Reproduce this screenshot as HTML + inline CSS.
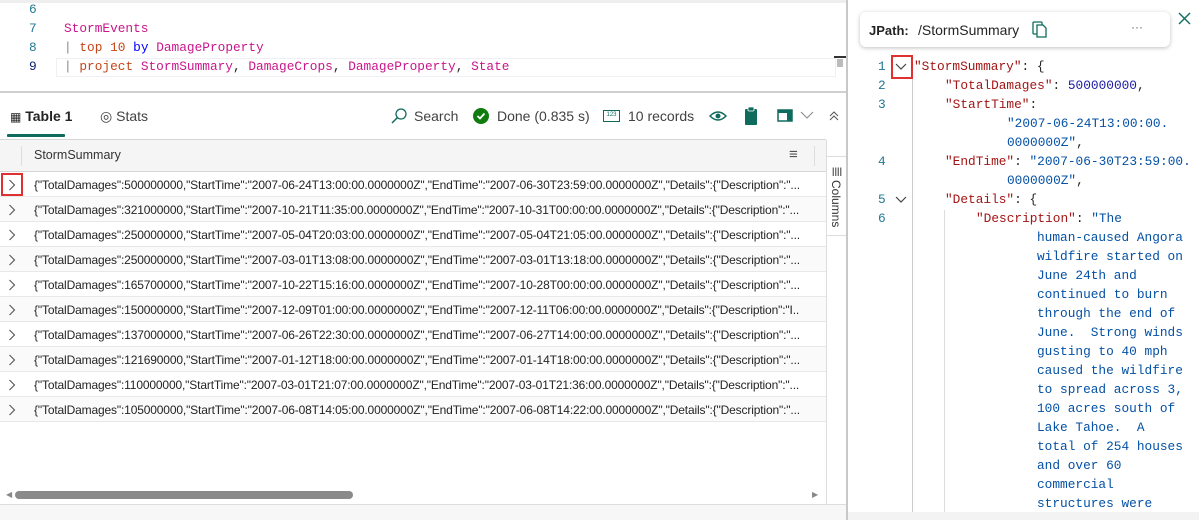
<!DOCTYPE html>
<html><head><meta charset="utf-8"><style>
*{margin:0;padding:0;box-sizing:border-box}
body{width:1199px;height:520px;overflow:hidden;background:#fff;font-family:"Liberation Sans",sans-serif;position:relative;color:#242424}
.a{position:absolute;white-space:nowrap}
.m{font-family:"Liberation Mono",monospace;font-size:12.8px}
.ln{color:#237893;font-family:"Liberation Mono",monospace;font-size:12.8px}
.kw{color:#c8168c}.op{color:#c4461a}.bl{color:#0000ff}
.row{position:absolute;left:0;width:826px;height:25px;border-bottom:1px solid #e8e8e8;font-size:12px}
.row .c{position:absolute;left:8px;top:7px}
.row .t{position:absolute;left:34px;top:6px;width:766px;overflow:hidden;white-space:nowrap;letter-spacing:-0.15px}
.jk{color:#a31515}.jn{color:#098658}.js{color:#0451a5}.jp{color:#242424}
.j{position:absolute;font-family:"Liberation Mono",monospace;font-size:12.8px;white-space:pre;line-height:19px}
</style></head><body>
<div class="a" style="left:0;top:0;width:846px;height:3px;background:#eee"></div>
<div class="a ln" style="left:29px;top:2px">6</div>
<div class="a ln" style="left:29px;top:21px">7</div>
<div class="a ln" style="left:29px;top:40px">8</div>
<div class="a ln" style="left:29px;top:59px;color:#0b216f">9</div>
<div class="a m" style="left:64px;top:21px"><span class="kw">StormEvents</span></div>
<div class="a m" style="left:64px;top:40px"><span style="color:#888">|</span> <span class="op">top</span> <span class="op">10</span> <span class="bl">by</span> <span class="kw">DamageProperty</span></div>
<div class="a" style="left:56px;top:58px;width:780px;height:19px;border:1px solid #eef0f3"></div>
<div class="a m" style="left:64px;top:59px"><span style="color:#888">|</span> <span class="op">project</span> <span class="kw">StormSummary</span>, <span class="kw">DamageCrops</span>, <span class="kw">DamageProperty</span>, <span class="kw">State</span></div>
<div class="a" style="left:834px;top:56px;width:12px;height:2px;background:#333"></div>
<div class="a" style="left:837px;top:59px;width:6px;height:8px;background:#bbb"></div>
<div class="a" style="left:0;top:91px;width:846px;height:2px;background:#d0d0d0"></div>
<div class="a" style="left:10px;top:108px;font-size:14px;color:#242424"><span style="font-size:12px">&#9638;</span> <b style="font-weight:600">Table 1</b></div>
<div class="a" style="left:7px;top:134px;width:58px;height:3px;background:#0f6c5c;border-radius:1px"></div>
<div class="a" style="left:100px;top:108px;font-size:14px;color:#424242">&#9678; Stats</div>
<svg class="a" style="left:390px;top:107px" width="18" height="18"><circle cx="11" cy="7" r="5" fill="none" stroke="#0f6c5c" stroke-width="1.3"/><path d="M7.5 10.5 L2 16" stroke="#0f6c5c" stroke-width="1.5"/></svg>
<div class="a" style="left:414px;top:108px;font-size:14px;color:#424242">Search</div>
<svg class="a" style="left:472px;top:107px" width="18" height="18"><circle cx="9" cy="9" r="8" fill="#107c10"/><path d="M5.5 9 L8 11.5 L12.5 6.5" stroke="#fff" stroke-width="1.8" fill="none"/></svg>
<div class="a" style="left:497px;top:108px;font-size:14px;color:#424242">Done (0.835 s)</div>
<div class="a" style="left:603px;top:110px;width:17px;height:12px;border:1.2px solid #0f6c5c;font-size:6px;color:#0f6c5c;text-align:center;line-height:9px">123</div>
<div class="a" style="left:628px;top:108px;font-size:14px;color:#424242">10 records</div>
<svg class="a" style="left:709px;top:109px" width="18" height="14"><path d="M1 7 Q9 -1 17 7 Q9 15 1 7Z" fill="none" stroke="#0f6c5c" stroke-width="1.5"/><circle cx="9" cy="7" r="2.5" fill="#0f6c5c"/></svg>
<svg class="a" style="left:744px;top:106px" width="14" height="20"><rect x="1" y="3" width="12" height="16" rx="1" fill="#0f6c5c"/><rect x="4" y="1" width="6" height="4" rx="1" fill="#0f6c5c" stroke="#fff" stroke-width=".8"/></svg>
<svg class="a" style="left:777px;top:109px" width="16" height="14"><rect x="1" y="1" width="14" height="11" fill="none" stroke="#0f6c5c" stroke-width="1.5"/><rect x="1" y="1" width="14" height="3" fill="#0f6c5c"/><rect x="10" y="1" width="5" height="11" fill="#0f6c5c"/></svg>
<svg class="a" style="left:800px;top:111px" width="14" height="8"><path d="M1 1 L7 7 L13 1" stroke="#888" fill="none"/></svg>
<svg class="a" style="left:829px;top:110px" width="10" height="12"><path d="M1 6 L5 2 L9 6 M1 10 L5 6 L9 10" stroke="#555" fill="none"/></svg>
<div class="a" style="left:0;top:139px;width:826px;height:1px;background:#d6d6d6"></div>
<div class="a" style="left:0;top:140px;width:826px;height:32px;background:#f5f5f5;border-bottom:1px solid #d6d6d6"></div>
<div class="a" style="left:21px;top:146px;width:1px;height:20px;background:#ddd"></div>
<div class="a" style="left:34px;top:148px;font-size:12.5px;color:#333">StormSummary</div>
<div class="a" style="left:789px;top:146px;font-size:15px;color:#555">&#8801;</div>
<div class="a" style="left:814px;top:146px;width:1px;height:20px;background:#ddd"></div>
<div class="row" style="top:172px;background:#fff"><svg class="c" width="8" height="12"><path d="M1.5 1 L6.5 6 L1.5 11" stroke="#555" fill="none" stroke-width="1.1"/></svg><div class="t">{"TotalDamages":500000000,"StartTime":"2007-06-24T13:00:00.0000000Z","EndTime":"2007-06-30T23:59:00.0000000Z","Details":{"Description":"...</div></div>
<div class="a" style="left:1px;top:173px;width:22px;height:23px;border:2px solid #e03030"></div>
<div class="row" style="top:197px;background:#fafafa"><svg class="c" width="8" height="12"><path d="M1.5 1 L6.5 6 L1.5 11" stroke="#555" fill="none" stroke-width="1.1"/></svg><div class="t">{"TotalDamages":321000000,"StartTime":"2007-10-21T11:35:00.0000000Z","EndTime":"2007-10-31T00:00:00.0000000Z","Details":{"Description":"...</div></div>
<div class="row" style="top:222px;background:#fff"><svg class="c" width="8" height="12"><path d="M1.5 1 L6.5 6 L1.5 11" stroke="#555" fill="none" stroke-width="1.1"/></svg><div class="t">{"TotalDamages":250000000,"StartTime":"2007-05-04T20:03:00.0000000Z","EndTime":"2007-05-04T21:05:00.0000000Z","Details":{"Description":"...</div></div>
<div class="row" style="top:247px;background:#fafafa"><svg class="c" width="8" height="12"><path d="M1.5 1 L6.5 6 L1.5 11" stroke="#555" fill="none" stroke-width="1.1"/></svg><div class="t">{"TotalDamages":250000000,"StartTime":"2007-03-01T13:08:00.0000000Z","EndTime":"2007-03-01T13:18:00.0000000Z","Details":{"Description":"...</div></div>
<div class="row" style="top:272px;background:#fff"><svg class="c" width="8" height="12"><path d="M1.5 1 L6.5 6 L1.5 11" stroke="#555" fill="none" stroke-width="1.1"/></svg><div class="t">{"TotalDamages":165700000,"StartTime":"2007-10-22T15:16:00.0000000Z","EndTime":"2007-10-28T00:00:00.0000000Z","Details":{"Description":"...</div></div>
<div class="row" style="top:297px;background:#fafafa"><svg class="c" width="8" height="12"><path d="M1.5 1 L6.5 6 L1.5 11" stroke="#555" fill="none" stroke-width="1.1"/></svg><div class="t">{"TotalDamages":150000000,"StartTime":"2007-12-09T01:00:00.0000000Z","EndTime":"2007-12-11T06:00:00.0000000Z","Details":{"Description":"I...</div></div>
<div class="row" style="top:322px;background:#fff"><svg class="c" width="8" height="12"><path d="M1.5 1 L6.5 6 L1.5 11" stroke="#555" fill="none" stroke-width="1.1"/></svg><div class="t">{"TotalDamages":137000000,"StartTime":"2007-06-26T22:30:00.0000000Z","EndTime":"2007-06-27T14:00:00.0000000Z","Details":{"Description":"...</div></div>
<div class="row" style="top:347px;background:#fafafa"><svg class="c" width="8" height="12"><path d="M1.5 1 L6.5 6 L1.5 11" stroke="#555" fill="none" stroke-width="1.1"/></svg><div class="t">{"TotalDamages":121690000,"StartTime":"2007-01-12T18:00:00.0000000Z","EndTime":"2007-01-14T18:00:00.0000000Z","Details":{"Description":"...</div></div>
<div class="row" style="top:372px;background:#fff"><svg class="c" width="8" height="12"><path d="M1.5 1 L6.5 6 L1.5 11" stroke="#555" fill="none" stroke-width="1.1"/></svg><div class="t">{"TotalDamages":110000000,"StartTime":"2007-03-01T21:07:00.0000000Z","EndTime":"2007-03-01T21:36:00.0000000Z","Details":{"Description":"...</div></div>
<div class="row" style="top:397px;background:#fafafa"><svg class="c" width="8" height="12"><path d="M1.5 1 L6.5 6 L1.5 11" stroke="#555" fill="none" stroke-width="1.1"/></svg><div class="t">{"TotalDamages":105000000,"StartTime":"2007-06-08T14:05:00.0000000Z","EndTime":"2007-06-08T14:22:00.0000000Z","Details":{"Description":"...</div></div>
<div class="a" style="left:6px;top:490px;font-size:8px;color:#888">&#9664;</div>
<div class="a" style="left:15px;top:491px;width:338px;height:8px;border-radius:4px;background:#8a8a8a"></div>
<div class="a" style="left:812px;top:490px;font-size:8px;color:#888">&#9654;</div>
<div class="a" style="left:0;top:504px;width:846px;height:16px;background:#f7f7f7;border-top:1px solid #ddd"></div>
<div class="a" style="left:826px;top:140px;width:1px;height:364px;background:#ddd"></div>
<div class="a" style="left:827px;top:156px;width:19px;height:80px;border-top:1px solid #ddd;border-bottom:1px solid #ddd"></div>
<div class="a" style="left:832px;top:166px;font-size:9px;color:#555;font-weight:bold">||||</div>
<div class="a" style="left:829px;top:180px;font-size:12px;color:#333;writing-mode:vertical-rl">Columns</div>
<div class="a" style="left:846px;top:0;width:2px;height:520px;background:#c8c8c8"></div>
<div class="a" style="left:860px;top:12px;width:310px;height:35px;border-radius:6px;box-shadow:0 1px 4px rgba(0,0,0,.25);background:#fff"></div>
<div class="a" style="left:869px;top:23px;font-size:13px;font-weight:bold;color:#242424">JPath:</div>
<div class="a" style="left:918px;top:22px;font-size:14px;color:#242424">/StormSummary</div>
<svg class="a" style="left:1032px;top:21px" width="16" height="18"><rect x="1" y="1" width="9" height="12" rx="1" fill="none" stroke="#0f6c5c" stroke-width="1.3"/><path d="M5 4 V16 H14 V7 L11 4Z" fill="#fff" stroke="#0f6c5c" stroke-width="1.3"/></svg>
<div class="a" style="left:1131px;top:20px;font-size:12px;color:#666">···</div>
<svg class="a" style="left:1178px;top:12px" width="13" height="13"><path d="M1 1 L12 12 M12 1 L1 12" stroke="#0f6c5c" stroke-width="1.4"/></svg>
<div class="a" style="left:848px;top:50px;width:351px;height:462px;overflow:hidden">
<div class="a" style="left:64px;top:26px;width:1px;height:444px;background:#ccc"></div>
<div class="a" style="left:96px;top:160px;width:1px;height:310px;background:#ddd"></div>
<div class="j ln" style="left:30px;top:7px">1</div>
<div class="j ln" style="left:30px;top:26px">2</div>
<div class="j ln" style="left:30px;top:45px">3</div>
<div class="j ln" style="left:30px;top:102px">4</div>
<div class="j ln" style="left:30px;top:140px">5</div>
<div class="j ln" style="left:30px;top:159px">6</div>
<svg class="a" style="left:47px;top:13px" width="12" height="8"><path d="M1 1 L6 6 L11 1" stroke="#444" fill="none" stroke-width="1.2"/></svg>
<div class="a" style="left:43px;top:5px;width:22px;height:24px;border:2px solid #e03030"></div>
<svg class="a" style="left:47px;top:146px" width="12" height="8"><path d="M1 1 L6 6 L11 1" stroke="#444" fill="none" stroke-width="1.2"/></svg>
<div class="j" style="left:66px;top:7px"><span class="jk">"StormSummary"</span><span class="jp">: {</span></div>
<div class="j" style="left:97px;top:26px"><span class="jk">"TotalDamages"</span><span class="jp">: </span><span style="color:#1a1aa6">500000000</span><span class="jp">,</span></div>
<div class="j" style="left:97px;top:45px"><span class="jk">"StartTime"</span><span class="jp">:</span></div>
<div class="j js" style="left:159px;top:64px">"2007-06-24T13:00:00.
0000000Z"<span class="jp">,</span></div>
<div class="j" style="left:97px;top:102px"><span class="jk">"EndTime"</span><span class="jp">: </span><span class="js">"2007-06-30T23:59:00.</span></div>
<div class="j js" style="left:159px;top:121px">0000000Z"<span class="jp">,</span></div>
<div class="j" style="left:97px;top:140px"><span class="jk">"Details"</span><span class="jp">: {</span></div>
<div class="j" style="left:128px;top:159px"><span class="jk">"Description"</span><span class="jp">: </span><span class="js">"The</span></div>
<div class="j js" style="left:189px;top:178px">human-caused Angora
wildfire started on
June 24th and
continued to burn
through the end of
June.  Strong winds
gusting to 40 mph
caused the wildfire
to spread across 3,
100 acres south of
Lake Tahoe.  A
total of 254 houses
and over 60
commercial
structures were
destroyed..."</div>
</div>
<div class="a" style="left:848px;top:512px;width:351px;height:8px;background:#f3f3f3"></div>
</body></html>
